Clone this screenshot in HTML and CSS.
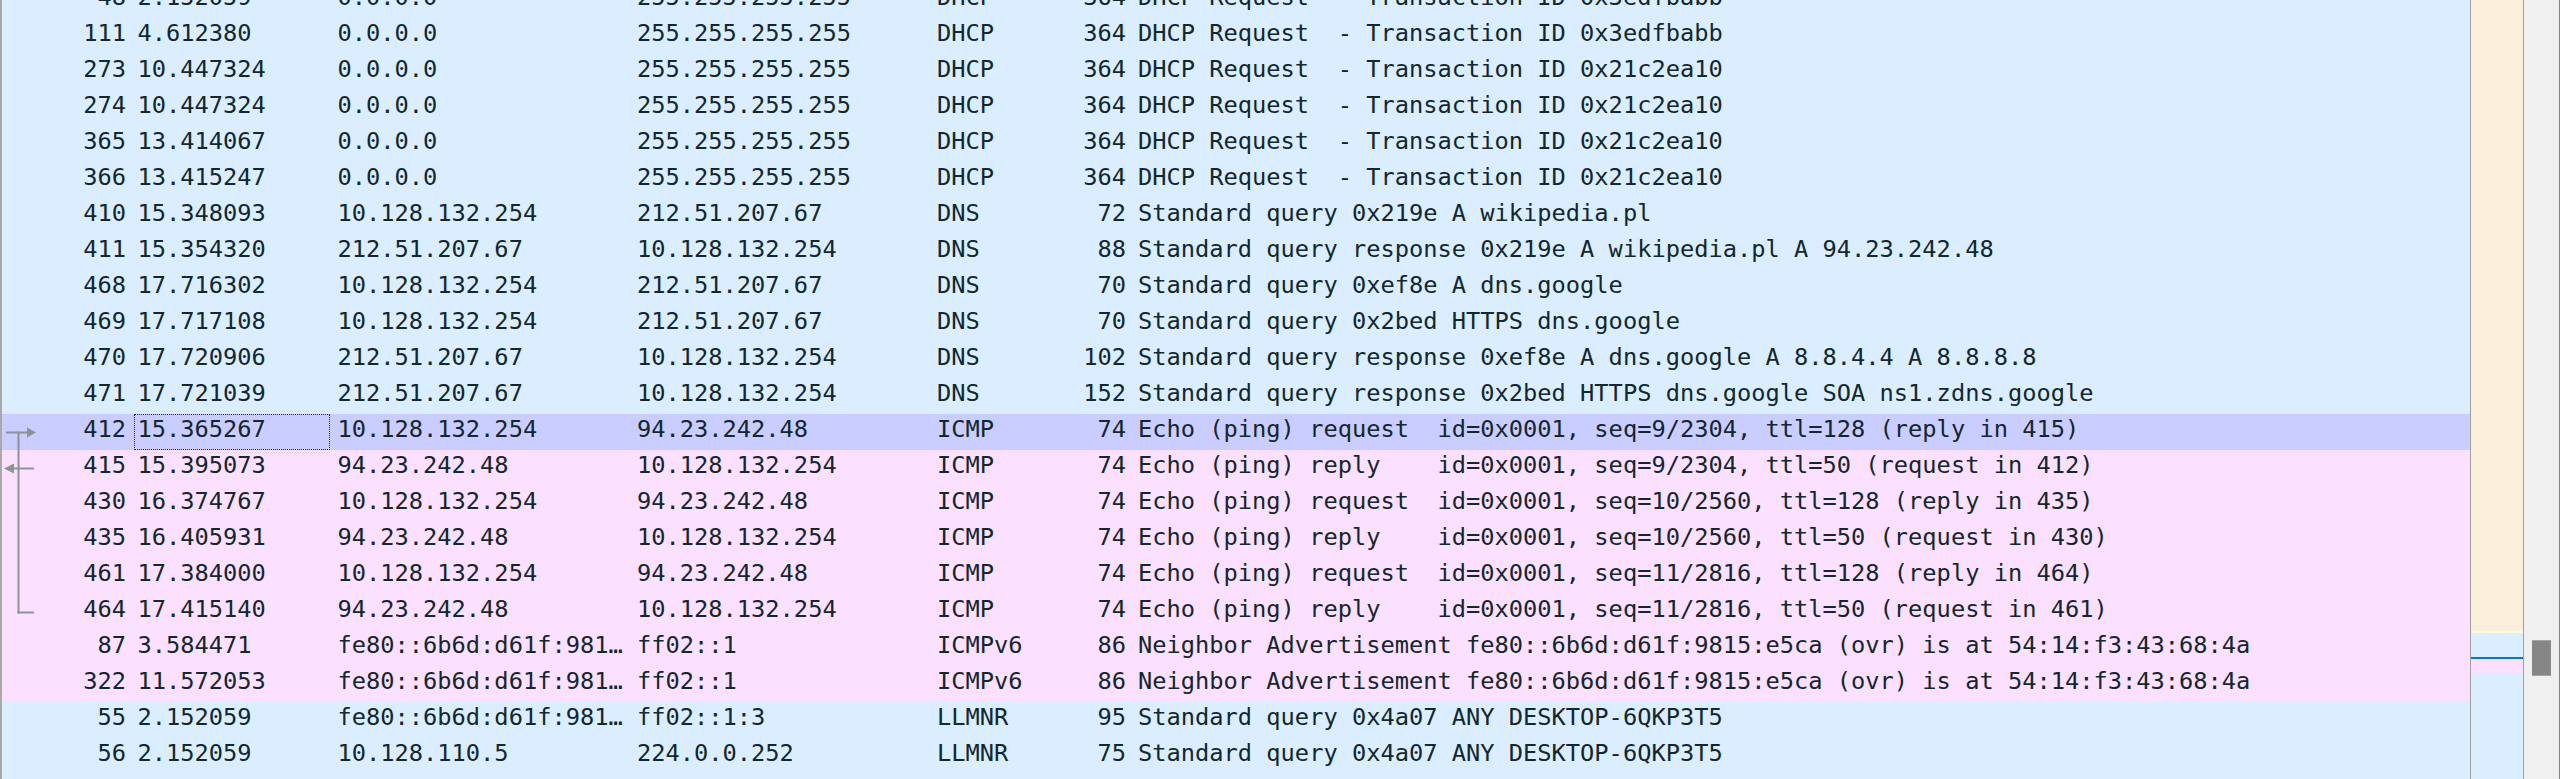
FILE: index.html
```html
<!DOCTYPE html>
<html lang="en">
<head>
<meta charset="utf-8">
<title>Packet list</title>
<link rel="stylesheet" href="styles.css">
</head>
<body>
<div class="app">
  <div class="pane">
    <div class="list">
      <div class="row udp"><span class="c no">48</span><span class="c time">2.152059</span><span class="c src">0.0.0.0</span><span class="c dst">255.255.255.255</span><span class="c proto">DHCP</span><span class="c len">364</span><span class="c info">DHCP Request  - Transaction ID 0x3edfbabb</span></div>
      <div class="row udp"><span class="c no">111</span><span class="c time">4.612380</span><span class="c src">0.0.0.0</span><span class="c dst">255.255.255.255</span><span class="c proto">DHCP</span><span class="c len">364</span><span class="c info">DHCP Request  - Transaction ID 0x3edfbabb</span></div>
      <div class="row udp"><span class="c no">273</span><span class="c time">10.447324</span><span class="c src">0.0.0.0</span><span class="c dst">255.255.255.255</span><span class="c proto">DHCP</span><span class="c len">364</span><span class="c info">DHCP Request  - Transaction ID 0x21c2ea10</span></div>
      <div class="row udp"><span class="c no">274</span><span class="c time">10.447324</span><span class="c src">0.0.0.0</span><span class="c dst">255.255.255.255</span><span class="c proto">DHCP</span><span class="c len">364</span><span class="c info">DHCP Request  - Transaction ID 0x21c2ea10</span></div>
      <div class="row udp"><span class="c no">365</span><span class="c time">13.414067</span><span class="c src">0.0.0.0</span><span class="c dst">255.255.255.255</span><span class="c proto">DHCP</span><span class="c len">364</span><span class="c info">DHCP Request  - Transaction ID 0x21c2ea10</span></div>
      <div class="row udp"><span class="c no">366</span><span class="c time">13.415247</span><span class="c src">0.0.0.0</span><span class="c dst">255.255.255.255</span><span class="c proto">DHCP</span><span class="c len">364</span><span class="c info">DHCP Request  - Transaction ID 0x21c2ea10</span></div>
      <div class="row udp"><span class="c no">410</span><span class="c time">15.348093</span><span class="c src">10.128.132.254</span><span class="c dst">212.51.207.67</span><span class="c proto">DNS</span><span class="c len">72</span><span class="c info">Standard query 0x219e A wikipedia.pl</span></div>
      <div class="row udp"><span class="c no">411</span><span class="c time">15.354320</span><span class="c src">212.51.207.67</span><span class="c dst">10.128.132.254</span><span class="c proto">DNS</span><span class="c len">88</span><span class="c info">Standard query response 0x219e A wikipedia.pl A 94.23.242.48</span></div>
      <div class="row udp"><span class="c no">468</span><span class="c time">17.716302</span><span class="c src">10.128.132.254</span><span class="c dst">212.51.207.67</span><span class="c proto">DNS</span><span class="c len">70</span><span class="c info">Standard query 0xef8e A dns.google</span></div>
      <div class="row udp"><span class="c no">469</span><span class="c time">17.717108</span><span class="c src">10.128.132.254</span><span class="c dst">212.51.207.67</span><span class="c proto">DNS</span><span class="c len">70</span><span class="c info">Standard query 0x2bed HTTPS dns.google</span></div>
      <div class="row udp"><span class="c no">470</span><span class="c time">17.720906</span><span class="c src">212.51.207.67</span><span class="c dst">10.128.132.254</span><span class="c proto">DNS</span><span class="c len">102</span><span class="c info">Standard query response 0xef8e A dns.google A 8.8.4.4 A 8.8.8.8</span></div>
      <div class="row udp"><span class="c no">471</span><span class="c time">17.721039</span><span class="c src">212.51.207.67</span><span class="c dst">10.128.132.254</span><span class="c proto">DNS</span><span class="c len">152</span><span class="c info">Standard query response 0x2bed HTTPS dns.google SOA ns1.zdns.google</span></div>
      <div class="row sel"><span class="c no"><svg class="ind" viewBox="0 0 40 36" width="40" height="36"><rect x="4" y="17.5" width="22" height="2"/><polygon points="25,13.5 34,18.5 25,23.5"/><rect x="15.5" y="17.5" width="2" height="18.5"/></svg>412</span><span class="c time">15.365267</span><span class="c src">10.128.132.254</span><span class="c dst">94.23.242.48</span><span class="c proto">ICMP</span><span class="c len">74</span><span class="c info">Echo (ping) request  id=0x0001, seq=9/2304, ttl=128 (reply in 415)</span></div>
      <div class="row icmp"><span class="c no"><svg class="ind" viewBox="0 0 40 36" width="40" height="36"><polygon points="2,18.5 12,13.5 12,23.5"/><rect x="11" y="17.5" width="21" height="2"/><rect x="15.5" y="0" width="2" height="36"/></svg>415</span><span class="c time">15.395073</span><span class="c src">94.23.242.48</span><span class="c dst">10.128.132.254</span><span class="c proto">ICMP</span><span class="c len">74</span><span class="c info">Echo (ping) reply    id=0x0001, seq=9/2304, ttl=50 (request in 412)</span></div>
      <div class="row icmp"><span class="c no"><svg class="ind" viewBox="0 0 40 36" width="40" height="36"><rect x="15.5" y="0" width="2" height="36"/></svg>430</span><span class="c time">16.374767</span><span class="c src">10.128.132.254</span><span class="c dst">94.23.242.48</span><span class="c proto">ICMP</span><span class="c len">74</span><span class="c info">Echo (ping) request  id=0x0001, seq=10/2560, ttl=128 (reply in 435)</span></div>
      <div class="row icmp"><span class="c no"><svg class="ind" viewBox="0 0 40 36" width="40" height="36"><rect x="15.5" y="0" width="2" height="36"/></svg>435</span><span class="c time">16.405931</span><span class="c src">94.23.242.48</span><span class="c dst">10.128.132.254</span><span class="c proto">ICMP</span><span class="c len">74</span><span class="c info">Echo (ping) reply    id=0x0001, seq=10/2560, ttl=50 (request in 430)</span></div>
      <div class="row icmp"><span class="c no"><svg class="ind" viewBox="0 0 40 36" width="40" height="36"><rect x="15.5" y="0" width="2" height="36"/></svg>461</span><span class="c time">17.384000</span><span class="c src">10.128.132.254</span><span class="c dst">94.23.242.48</span><span class="c proto">ICMP</span><span class="c len">74</span><span class="c info">Echo (ping) request  id=0x0001, seq=11/2816, ttl=128 (reply in 464)</span></div>
      <div class="row icmp"><span class="c no"><svg class="ind" viewBox="0 0 40 36" width="40" height="36"><rect x="15.5" y="0" width="2" height="19.5"/><rect x="15.5" y="17.5" width="16.5" height="2"/></svg>464</span><span class="c time">17.415140</span><span class="c src">94.23.242.48</span><span class="c dst">10.128.132.254</span><span class="c proto">ICMP</span><span class="c len">74</span><span class="c info">Echo (ping) reply    id=0x0001, seq=11/2816, ttl=50 (request in 461)</span></div>
      <div class="row icmp"><span class="c no">87</span><span class="c time">3.584471</span><span class="c src">fe80::6b6d:d61f:9815:e5ca</span><span class="c dst">ff02::1</span><span class="c proto">ICMPv6</span><span class="c len">86</span><span class="c info">Neighbor Advertisement fe80::6b6d:d61f:9815:e5ca (ovr) is at 54:14:f3:43:68:4a</span></div>
      <div class="row icmp"><span class="c no">322</span><span class="c time">11.572053</span><span class="c src">fe80::6b6d:d61f:9815:e5ca</span><span class="c dst">ff02::1</span><span class="c proto">ICMPv6</span><span class="c len">86</span><span class="c info">Neighbor Advertisement fe80::6b6d:d61f:9815:e5ca (ovr) is at 54:14:f3:43:68:4a</span></div>
      <div class="row udp"><span class="c no">55</span><span class="c time">2.152059</span><span class="c src">fe80::6b6d:d61f:9815:e5ca</span><span class="c dst">ff02::1:3</span><span class="c proto">LLMNR</span><span class="c len">95</span><span class="c info">Standard query 0x4a07 ANY DESKTOP-6QKP3T5</span></div>
      <div class="row udp"><span class="c no">56</span><span class="c time">2.152059</span><span class="c src">10.128.110.5</span><span class="c dst">224.0.0.252</span><span class="c proto">LLMNR</span><span class="c len">75</span><span class="c info">Standard query 0x4a07 ANY DESKTOP-6QKP3T5</span></div>
      <div class="row udp"><span class="c no">57</span><span class="c time">2.152466</span><span class="c src">fe80::6b6d:d61f:9815:e5ca</span><span class="c dst">ff02::1:3</span><span class="c proto">LLMNR</span><span class="c len">95</span><span class="c info">Standard query 0x4a07 ANY DESKTOP-6QKP3T5</span></div>
    </div>
  </div>
  <div class="vsep"></div>
  <div class="minimap">
    <div class="mm-other"></div>
    <div class="mm-mark"></div>
    <div class="mm-udp1"></div>
    <div class="mm-sel"></div>
    <div class="mm-icmp"></div>
    <div class="mm-udp2"></div>
  </div>
  <div class="vsep"></div>
  <div class="scroll"><div class="thumb"></div></div>
  <div class="edge"></div>
</div>
</body>
</html>
```

FILE: styles.css
```css
* {
  box-sizing: border-box;
}

html,
body {
  margin: 0;
  width: 2560px;
  height: 779px;
  overflow: hidden;
  background: #f0f0f0;
}

.app {
  display: flex;
  width: 2560px;
  height: 779px;
}

.pane {
  flex: 0 0 2470px;
  border-left: 2px solid #a9a9a9;
  background: #daeeff;
  overflow: hidden;
  font-family: "DejaVu Sans Mono", monospace;
  font-size: 23.7px;
  color: #12272e;
}

.list {
  margin-top: -18px;
}

.row {
  display: flex;
  height: 36px;
  line-height: 30px;
  white-space: pre;
}

.udp {
  background: #daeeff;
}

.icmp {
  background: #fce0ff;
}

.sel {
  background: #cacdff;
}

.c {
  flex: none;
  overflow: hidden;
  height: 36px;
}

.no {
  width: 132px;
  padding-right: 8px;
  display: flex;
  justify-content: flex-end;
}

.ind {
  flex: none;
  margin-right: auto;
  fill: #8b9393;
}

.time {
  width: 196px;
  padding-left: 3.5px;
}

.sel .time {
  outline: 1px dotted #12272e;
  outline-offset: -1px;
}

.src {
  width: 294px;
  padding-left: 7.5px;
  text-overflow: ellipsis;
}

.dst {
  width: 299px;
  padding-left: 13px;
}

.proto {
  width: 153px;
  padding-left: 14px;
}

.len {
  width: 50px;
  text-align: right;
}

.info {
  flex: 1;
  padding-left: 12px;
}

.vsep {
  flex: 0 0 1px;
  background: #a0a0a0;
}

.minimap {
  flex: 0 0 52px;
  display: flex;
  flex-direction: column;
}

.mm-other {
  height: 631px;
  background: #f9efdb;
}

.mm-mark {
  height: 2px;
  background: #fdfbd2;
}

.mm-udp1 {
  height: 24px;
  background: #daeeff;
}

.mm-sel {
  height: 2px;
  background: #0078d7;
}

.mm-icmp {
  height: 14px;
  background: #fce0ff;
}

.mm-udp2 {
  flex: 1;
  background: #daeeff;
}

.scroll {
  flex: 0 0 35px;
  background: #f0f0f0;
  padding-top: 640px;
  padding-left: 8px;
}

.thumb {
  width: 19px;
  height: 36px;
  background: #868686;
  border-top: 1px solid #a3a3a3;
  border-bottom: 1px solid #a3a3a3;
}

.edge {
  flex: 0 0 1px;
  background: #828282;
}
```
